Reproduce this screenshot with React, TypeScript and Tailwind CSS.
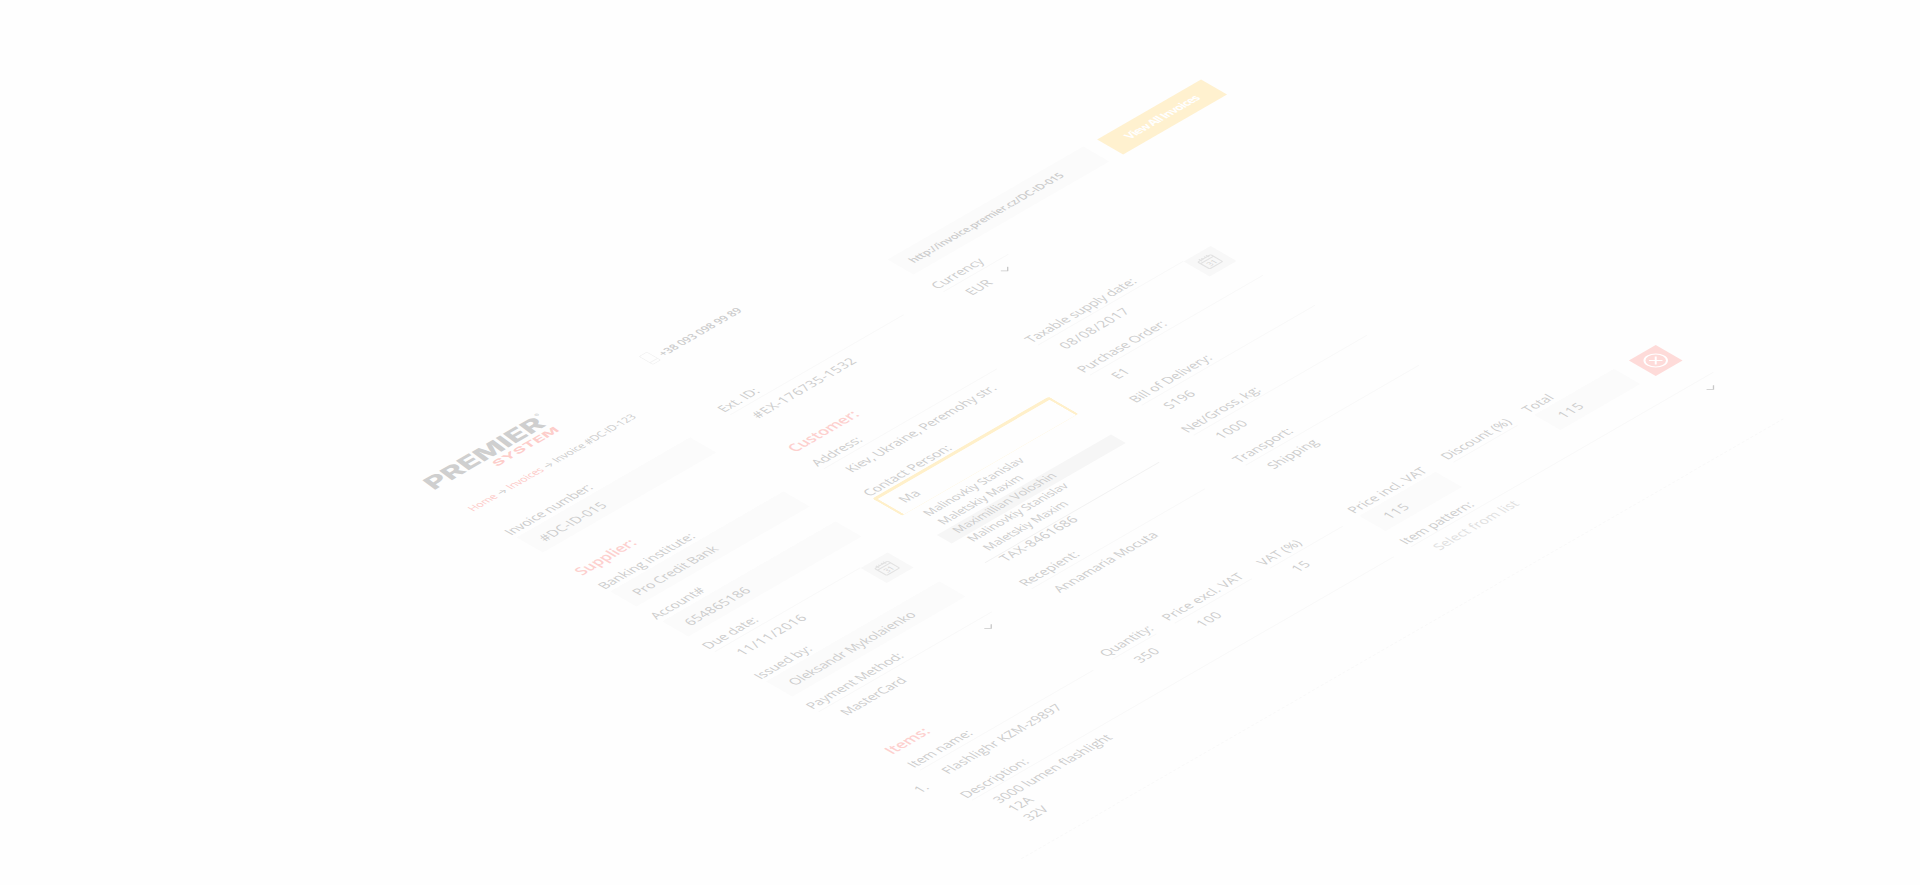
import type { ReactNode } from "react";

type FieldProps = {
  label: string;
  value?: string;
  filled?: boolean;
  labelClass?: string;
  valueClass?: string;
  boxClass?: string;
  className?: string;
  calendar?: boolean;
  chevron?: boolean;
};

function CalendarButton() {
  return (
    <div className="mt-px mr-px flex h-[30px] w-[31px] items-center justify-center bg-[#f8f8f8]">
      <svg width="18" height="18" viewBox="0 0 17 17" fill="none" stroke="#e2e2e2" strokeWidth="1.2">
        <rect x="1.5" y="2.5" width="14" height="13" rx="1" />
        <path d="M1.5 5.6H15.5M4.6 0.5V4M12.4 0.5V4M7 0.8V3M10 0.8V3" />
        <text x="8.5" y="13.6" textAnchor="middle" fontSize="7.5" fontFamily="Open Sans, sans-serif" fill="#d6d6d6" stroke="none">
          31
        </text>
      </svg>
    </div>
  );
}

function Chevron() {
  return (
    <svg width="10" height="6" viewBox="0 0 10 6" fill="none" stroke="#c8c8c8" strokeWidth="1.1">
      <path d="M1 0.7L5 4.7L9 0.7" />
    </svg>
  );
}

function Field({
  label,
  value = "",
  filled,
  labelClass = "",
  valueClass = "",
  boxClass = "w-[200px]",
  className = "",
  calendar,
  chevron,
}: FieldProps) {
  return (
    <div className={`flex flex-col ${className}`}>
      <div className={`h-4 pl-[2.5px] text-[13px] leading-[20px] whitespace-nowrap ${labelClass}`}>{label}</div>
      <div className={`mt-[3.5px] mb-[-0.5px] ml-[3.5px] flex h-[30px] ${boxClass}`}>
        <div
          className={`flex h-[30px] grow items-center justify-between border-t pr-[12px] pl-[12.5px] text-[13px] leading-4 whitespace-nowrap ${
            filled ? "border-[#fbfbfb] bg-[#fbfbfb]" : "border-[#f8f8f8]"
          } ${valueClass}`}
        >
          <span className="pt-[1.5px]">{value}</span>
          {chevron && <Chevron />}
        </div>
        {calendar && <CalendarButton />}
      </div>
    </div>
  );
}

function Heading({ children, className = "" }: { children: ReactNode; className?: string }) {
  return (
    <h2 className={`h-5 pl-[3.5px] text-[15px] leading-[23px] font-semibold whitespace-nowrap text-[#fdd0ce] ${className}`}>
      {children}
    </h2>
  );
}

function Logo() {
  return (
    <svg
      width="148"
      height="47"
      viewBox="0 -9 148 47"
      className="ml-[3.5px] block overflow-visible"
      fontFamily="Inter, sans-serif"
    >
      <g transform="translate(1 19) skewX(-7)">
        <text x="-2" y="0" fontSize="23" fontWeight="800" textLength="130.5" lengthAdjust="spacingAndGlyphs" fill="#cfcfcf">
          PREMIER
        </text>
      </g>
      <g transform="translate(59 31.8) skewX(-7)">
        <text x="0" y="0" fontSize="10.8" fontWeight="700" textLength="73" lengthAdjust="spacingAndGlyphs" fill="#fdcdca">
          SYSTEM
        </text>
      </g>
      <text x="132" y="5.5" fontSize="6" fill="#cbcbcb">
        ®
      </text>
    </svg>
  );
}

const people = [
  "Malinovkiy Stanislav",
  "Maletskiy Maxim",
  "Maximillian Voloshin",
  "Malinovkiy Stanislav",
  "Maletskiy Maxim",
];

function ContactPicker() {
  return (
    <div className="relative flex flex-col">
      <div className="h-4 pl-[2.5px] text-[13px] leading-[20px] whitespace-nowrap">Contact Person:</div>
      <div className="mt-[1.5px] ml-[2px] flex h-[35.5px] w-[204px] items-center rounded-[3px] border-x-[3px] border-t-[4px] border-b border-[#fff0ca] border-b-[#fff8e6] pt-px pl-[11.5px] text-[13px] leading-4">
        Ma
      </div>
      <ul className="absolute top-[54px] left-[2.5px] z-10 h-[94px] w-[201px] border-b border-[#f1f1f1] bg-[#fefefe] pt-[3.5px]">
        {people.map((name, i) => (
          <li
            key={i}
            className={`h-[17.25px] pl-[14.5px] text-[12px] leading-[13px] tracking-[-0.04px] whitespace-nowrap ${i === 2 ? "bg-[#f6f6f6]" : ""}`}
          >
            {name}
          </li>
        ))}
      </ul>
    </div>
  );
}

function Arrow() {
  return <span className="font-[Inter,sans-serif] text-[10px]">→</span>;
}

export default function App() {
  return (
    <main className="h-[885px] w-[1920px] overflow-hidden bg-[#fefefe] font-['Open_Sans',sans-serif] text-[#cccccc]">
      <div className="h-[770px] w-[900px] origin-top-left [transform:matrix(0.866,-0.5,0.866,0.5,382.7,490)]">
        <div className="grid h-[542px] grid-cols-[246px_246px_382px] pl-[26px]">
          <div className="flex flex-col pt-[2px]">
            <Logo />
            <nav className="mt-[12.5px] mb-[-0.5px] ml-[4.5px] h-4 text-[10.5px] leading-[17px] tracking-[-0.11px] whitespace-nowrap">
              <span className="text-[#fdc9c7]">Home</span> <Arrow /> <span className="text-[#fdc9c7]">Invoices</span>{" "}
              <Arrow /> Invoice #DC-ID-123
            </nav>
            <Field
              className="mt-7"
              label="Invoice number:"
              labelClass="tracking-[-0.18px]"
              value="#DC-ID-015"
              valueClass="tracking-[0.25px]"
              filled
            />
            <Heading className="mt-[30px]">Supplier:</Heading>
            <div className="mt-[9px] flex flex-col gap-[11px]">
              <Field label="Banking institute:" value="Pro Credit Bank" valueClass="tracking-[-0.15px]" filled />
              <Field label="Account#" value="654865186" valueClass="tracking-[0.4px]" filled />
              <Field label="Due date:" value="11/11/2016" valueClass="tracking-[0.65px]" calendar />
              <Field label="Issued by:" value="Oleksandr Mykolaienko" valueClass="tracking-[-0.05px]" filled />
              <Field label="Payment Method:" labelClass="tracking-[-0.1px]" value="MasterCard" valueClass="tracking-[-0.1px]" chevron />
            </div>
          </div>

          <div className="flex flex-col pt-4">
            <div className="ml-[8.5px] flex h-4 items-center">
              <svg width="10" height="17" viewBox="0 0 10 17" fill="none" stroke="#f1f1f1" className="-mt-1">
                <rect x="0.5" y="0.5" width="9" height="16" rx="1.5" />
                <path d="M0.5 13H9.5" />
              </svg>
              <span className="ml-[5px] pt-px text-[10.8px] leading-4 font-semibold whitespace-nowrap">
                +38 093 098 99 89
              </span>
            </div>
            <Field className="mt-[73px]" label="Ext. ID:" value="#EX-176735-1532" valueClass="tracking-[0.6px]" />
            <Heading className="mt-[30px]">Customer:</Heading>
            <div className="mt-[9px] flex flex-col gap-[11px]">
              <Field label="Address:" value="Kiev, Ukraine, Peremohy str." valueClass="tracking-[-0.1px]" />
              <ContactPicker />
            </div>
            <div className="mt-[86px] flex flex-col gap-[11px]">
              <div className="z-20 ml-[3.5px] flex h-[30px] w-[200px] items-center pl-[12.5px] text-[13px] leading-4 tracking-[0.5px]">
                TAX-8461686
              </div>
              <Field label="Recepient:" value="Annamaria Mocuta" valueClass="tracking-[-0.05px]" />
            </div>
          </div>

          <div className="flex flex-col pt-[60px]">
            <div className="ml-[3.5px] flex gap-[15px]">
              <div className="mt-[0.5px] flex h-[30px] w-[226.5px] items-center bg-[#fbfbfb] pt-px pl-3 text-[10.5px] leading-4 font-semibold tracking-[-0.14px] whitespace-nowrap">
                http://invoice.premier.cz/DC-ID-015
              </div>
              <div className="mt-[1.5px] flex h-[30px] w-[119.5px] items-center justify-center bg-[#fff1cf] text-[11.5px] leading-4 font-bold tracking-[-0.85px] whitespace-nowrap text-white">
                View All Invoices
              </div>
            </div>
            <Field className="mt-[13.5px] ml-[0.5px]" label="Currency" value="EUR" boxClass="w-[75px]" chevron />
            <div className="mt-[59px] ml-px flex flex-col gap-[11px]">
              <Field label="Taxable supply date:" labelClass="tracking-[-0.1px]" value="08/08/2017" valueClass="tracking-[0.65px]" calendar />
              <Field label="Purchase Order:" labelClass="tracking-[-0.1px]" value="E1" valueClass="tracking-[0.4px]" />
              <Field label="Bill of Delivery:" value="S196" valueClass="tracking-[0.4px]" />
              <Field label="Net/Gross, kg:" value="1000" valueClass="tracking-[0.4px]" />
              <Field label="Transport:" value="Shipping" />
            </div>
          </div>
        </div>

        <Heading className="ml-[26px]">Items:</Heading>
        <div className="mt-2 flex">
          <div className="w-[26px] pt-[30.5px] pl-[7px] text-[13px] leading-4">1.</div>
          <Field className="w-[222px]" label="Item name:" value="Flashlighr KZM-z9897" valueClass="tracking-[0.22px]" />
          <Field className="w-[72px]" boxClass="w-[51px]" label="Quantity:" value="350" valueClass="tracking-[0.5px]" />
          <Field className="w-[110px]" boxClass="w-[89px]" label="Price excl. VAT" labelClass="tracking-[0.1px]" value="100" valueClass="tracking-[0.5px]" />
          <Field className="w-[104.5px]" boxClass="w-[84px]" label="VAT (%)" value="15" valueClass="tracking-[0.5px]" />
          <Field className="w-[107.5px]" boxClass="w-[88px]" label="Price incl. VAT" labelClass="tracking-[0.1px]" value="115" valueClass="tracking-[0.8px] pl-[14px]" filled />
          <Field className="w-[94px]" boxClass="w-[74px]" label="Discount (%)" />
          <Field className="w-[113px]" boxClass="w-[92px]" label="Total" value="115" valueClass="tracking-[0.8px] pl-[14px]" filled />
          <div className="mt-[20px] flex h-[31px] w-[31px] items-center justify-center bg-[#fedbd9]">
            <svg width="21" height="21" viewBox="0 0 21 21" fill="none" stroke="#ffffff" strokeWidth="1.6">
              <circle cx="10.5" cy="10.5" r="9.2" />
              <path d="M6.6 6.6L14.4 14.4M14.4 6.6L6.6 14.4" />
            </svg>
          </div>
        </div>

        <div className="mt-[9.5px] flex h-[107.5px] w-[880px] border-b border-dashed border-[#f8f8f8] pl-[26px]">
          <div className="flex w-[507.5px] flex-col">
            <div className="h-4 pl-[2.5px] text-[13px] leading-[20px]">Description:</div>
            <div className="mt-[3.5px] ml-[3.5px] w-[487px] border-t border-[#f8f8f8] pt-[6px] pl-[13px] text-[13px] leading-[17.3px] tracking-[0.04px]">
              <div>3000 lumen flashlight</div>
              <div>12A</div>
              <div>32V</div>
            </div>
          </div>
          <Field
            label="Item pattern:"
            value="Select from list"
            valueClass="tracking-[0.22px] text-[#e0e0e0]"
            boxClass="w-[349px] -mr-2"
            chevron
          />
        </div>
      </div>
    </main>
  );
}
